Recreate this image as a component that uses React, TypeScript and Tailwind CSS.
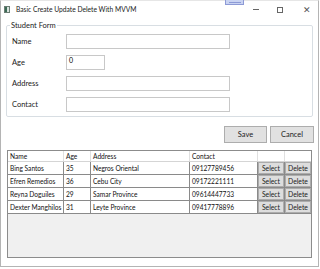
// WPF-style "Basic Create Update Delete With MVVM" window

const people = [
  { name: 'Bing Santos', age: '35', address: 'Negros Oriental', contact: '09127789456' },
  { name: 'Efren Remedios', age: '36', address: 'Cebu City', contact: '09172221111' },
  { name: 'Reyna Doguiles', age: '29', address: 'Samar Province', contact: '09614447733' },
  { name: 'Dexter Manghilos', age: '31', address: 'Leyte Province', contact: '09417778896' },
];

function Field({ label, wide = true, value = '' }: { label: string; wide?: boolean; value?: string }) {
  return (
    <div className="flex items-center h-[15px]">
      <span className="w-[59px] pl-[5px] text-[7.5px] text-[#222]">{label}</span>
      <div
        className={`h-[15px] border border-[#c8c8c8] bg-white text-[7px] leading-[9px] pl-[2px] ${
          wide ? 'w-[164px]' : 'w-[39px]'
        }`}
      >
        {value}
      </div>
    </div>
  );
}

export default function App() {
  return (
    <div className="w-[320px] h-[269px] bg-white relative" style={{ fontFamily: 'Lato, "Noto Sans", sans-serif' }}>
      <div className="w-[319px] h-[267px] border border-[#b4b4b4] border-t-[#e6e6e6] flex flex-col">
        {/* Title bar */}
        <div className="h-[17px] flex items-center pl-[3px] text-[6.7px] text-[#222]">
          <div className="w-[6px] h-[7px] border border-[#6b7d74] bg-[#d9e4df] flex mr-[6px]">
            <div className="w-[2px] bg-[#3c6b55]" />
          </div>
          <span>Basic Create Update Delete With MVVM</span>
          <div className="ml-auto flex items-center text-[#555]">
            <div className="w-[6px] h-px bg-[#666] mr-[18px]" />
            <div className="w-[6px] h-[6px] border border-[#666] mr-[20px]" />
            <span className="text-[9px] leading-none mr-[7px]">✕</span>
          </div>
        </div>

        {/* Student form group */}
        <fieldset className="mx-[5px] mt-[3px] h-[96px] border border-[#d8dee3] rounded-[2px] px-0 flex flex-col">
          <legend className="ml-[3px] px-[1px] text-[7.5px] text-[#222] leading-[9px]">Student Form</legend>
          <div className="flex flex-col gap-[6px] mt-[4px]">
            <Field label="Name" />
            <Field label="Age" wide={false} value="0" />
            <Field label="Address" />
            <Field label="Contact" />
          </div>
        </fieldset>

        {/* Buttons */}
        <div className="flex justify-end gap-[3px] mr-[4px] mt-[9px]">
          <button className="w-[43px] h-[17px] bg-[#e1e1e1] border border-[#adadad] text-[7.5px] text-[#222]">Save</button>
          <button className="w-[44px] h-[17px] bg-[#e1e1e1] border border-[#adadad] text-[7.5px] text-[#222]">Cancel</button>
        </div>

        {/* Data grid */}
        <div className="mx-[6px] mt-[7px] h-[108px] border border-[#8c8c8c] bg-[#f0f0f0] text-[6.6px] text-[#111]">
          <div className="flex h-[11px] bg-white border-b border-[#d5d5d5] leading-[11px]">
            <div className="w-[56px] pl-[2px] border-r border-[#e0e0e0]">Name</div>
            <div className="w-[27px] pl-[2px] border-r border-[#e0e0e0]">Age</div>
            <div className="w-[99px] pl-[2px] border-r border-[#e0e0e0]">Address</div>
            <div className="w-[68px] pl-[2px] border-r border-[#e0e0e0]">Contact</div>
            <div className="w-[27px] border-r border-[#e0e0e0]" />
            <div className="flex-1" />
          </div>
          {people.map((p) => (
            <div key={p.name} className="flex h-[13px] bg-white border-b border-[#8a8a8a] leading-[12px] whitespace-nowrap">
              <div className="w-[56px] pl-[2px] border-r border-[#8a8a8a]">{p.name}</div>
              <div className="w-[27px] pl-[2px] border-r border-[#8a8a8a]">{p.age}</div>
              <div className="w-[99px] pl-[2px] border-r border-[#8a8a8a]">{p.address}</div>
              <div className="w-[68px] pl-[2px] border-r border-[#8a8a8a]">{p.contact}</div>
              <div className="w-[27px] border-r border-[#8a8a8a] flex">
                <button className="flex-1 bg-[#dddddd] border border-[#acacac] text-[6.8px] leading-[10px] text-[#222]">Select</button>
              </div>
              <div className="flex-1 flex">
                <button className="flex-1 bg-[#dddddd] border border-[#acacac] text-[6.8px] leading-[10px] text-[#222]">Delete</button>
              </div>
            </div>
          ))}
        </div>
      </div>

      {/* snap handle at top edge */}
      <div className="absolute left-[225px] top-0 w-[19px] h-[5px] bg-[#c9d3f2] border border-[#8d9ad6] border-t-0 flex items-center justify-center">
        <div className="w-[12px] h-px bg-[#8d9ad6]" />
      </div>
    </div>
  );
}
